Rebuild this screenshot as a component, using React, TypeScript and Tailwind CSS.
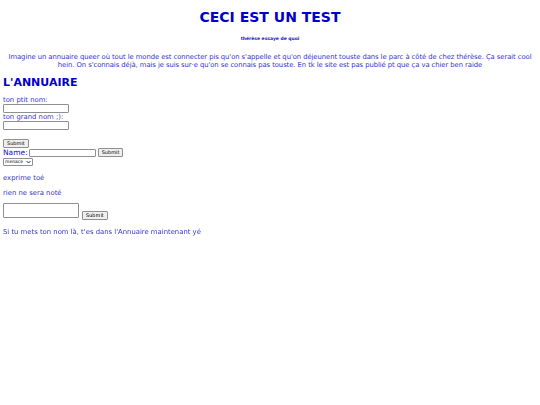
export default function App() {
  const body = "font-['DejaVu_Sans',Verdana,sans-serif]";
  const btn =
    "h-[9px] px-[3px] text-[5px] leading-none text-black bg-[#efefef] border border-[#8f8f8f] rounded-[1px]";
  const field = "block w-[66px] h-[9px] bg-white border border-[#8f8f8f] rounded-[1px]";

  return (
    <div className={`${body} min-h-[405px] bg-white px-[3px] pt-[11px] text-[#3535d0]`}>
      {/* En-tête */}
      <h1 className="text-center text-[14px] leading-[12px] font-bold text-[#0000cc]">CECI EST UN TEST</h1>
      <h2 className="mt-[13px] text-center text-[4.5px] leading-[5px] font-bold text-[#2020c0]">thérèse essaye de quoi</h2>
      <p className="mt-[12px] text-center text-[6.85px] leading-[8px] tracking-[-0.08px]">
        Imagine un annuaire queer où tout le monde est connecter pis qu'on s'appelle et qu'on déjeunent touste dans le parc à côté de chez thérèse. Ça serait cool hein. On s'connais déjà, mais je suis sur·e qu'on se connais pas touste. En tk le site est pas publié pt que ça va chier ben raide
      </p>

      {/* Annuaire */}
      <h3 className="mt-[8px] text-[11px] leading-[12px] font-bold text-[#0000cc]">L'ANNUAIRE</h3>
      <form className="mt-[7px] text-[6.85px] leading-[8px]">
        <label className="block">ton ptit nom:</label>
        <input className={field} />
        <label className="block">ton grand nom ;):</label>
        <input className={field} />
        <button type="button" className={`${btn} mt-[9px] block`}>Submit</button>
      </form>
      <div className="flex items-center gap-[1px] text-[7.5px] leading-[8px] text-[#1010e0]">
        <span>Name:</span>
        <input className="w-[67px] h-[8px] bg-white border border-[#8f8f8f] rounded-[1px]" />
        <button type="button" className={`${btn} ml-[1px] h-[8px]`}>Submit</button>
      </div>
      <div className="mt-[1px] flex items-center w-[30px] h-[8px] border border-[#8f8f8f] rounded-[1px] bg-white text-[4.5px] text-black px-[1px]">
        <span className="flex-1 leading-none">menace</span>
        <svg width="5" height="4" viewBox="0 0 10 8" fill="none" stroke="#333" strokeWidth="2">
          <path d="M1 2l4 4 4-4" />
        </svg>
      </div>

      {/* Message */}
      <p className="mt-[8px] text-[6.85px] leading-[8px]">exprime toé</p>
      <p className="mt-[7px] text-[6.85px] leading-[8px]">rien ne sera noté</p>
      <div className="mt-[6px] flex items-end gap-[3px]">
        <textarea className="w-[76px] h-[15px] bg-white border border-[#8f8f8f] rounded-[1px] resize-none" />
        <button type="button" className={`${btn} h-[8px] -mb-[2px]`}>Submit</button>
      </div>
      <p className="mt-[10px] text-[6.85px] leading-[8px]">Si tu mets ton nom là, t'es dans l'Annuaire maintenant yé</p>
    </div>
  );
}
